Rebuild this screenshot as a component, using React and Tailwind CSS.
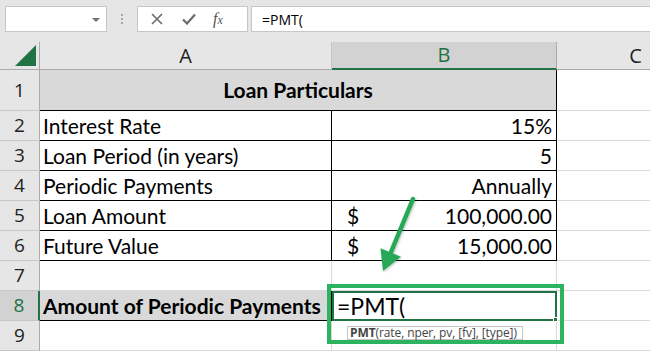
import React from "react";

const cellFont = { fontFamily: "Lato, 'Open Sans', sans-serif" };

function RowHead({ n, active }) {
  return (
    <div
      className={
        "flex items-center justify-center border-b text-[19px] " +
        (active
          ? "bg-[#d2d2d2] border-b-[#c6c6c6] border-r-2 border-r-[#217346] text-[#217346]"
          : "bg-[#e6e6e6] border-b-[#c6c6c6] border-r border-r-[#ababab] text-[#222]")
      }
      style={{ fontFamily: "'Open Sans', sans-serif" }}
    >
      {n}
    </div>
  );
}

function Cell({ children, className = "", right }) {
  return (
    <div
      className={
        "flex items-center overflow-hidden whitespace-nowrap text-[21px] text-black " +
        (right ? "justify-end pr-[4px] " : "pl-[3px] ") +
        className
      }
      style={cellFont}
    >
      {children}
    </div>
  );
}

const grid = "border-r border-b border-r-[#d9d9d9] border-b-[#d9d9d9] bg-white";
const tb = "border-r border-b border-black bg-white";

export default function App() {
  return (
    <div className="relative w-[650px] h-[351px] overflow-hidden bg-[#e6e6e6]">
      {/* toolbar */}
      <div className="flex h-[42px] items-start pt-[6px] pl-[5px]">
        <div className="relative h-[26px] w-[102px] border border-[#c6c6c6] bg-white">
          <div className="absolute right-[6px] top-[11px] h-0 w-0 border-x-[4px] border-t-[4px] border-x-transparent border-t-[#707070]" />
        </div>
        <div className="ml-[14px] mt-[8px] flex w-[2px] flex-col gap-[2px]">
          <div className="h-[2px] w-[2px] bg-[#a6a6a6]" />
          <div className="h-[2px] w-[2px] bg-[#a6a6a6]" />
          <div className="h-[2px] w-[2px] bg-[#a6a6a6]" />
        </div>
        <div className="ml-[14px] flex h-[26px] w-[111px] items-center border border-[#c6c6c6] bg-white">
          <svg width="12" height="12" viewBox="0 0 12 12" className="ml-[13px]">
            <path d="M1 1 L11 11 M11 1 L1 11" stroke="#6b6b6b" strokeWidth="1.6" />
          </svg>
          <svg width="14" height="12" viewBox="0 0 14 12" className="ml-[19px]">
            <path d="M1 6.5 L5 10.5 L13 1.5" stroke="#6b6b6b" strokeWidth="2.2" fill="none" />
          </svg>
          <span
            className="ml-[17px] text-[16px] italic text-[#555]"
            style={{ fontFamily: "'Liberation Serif', serif" }}
          >
            f<span className="text-[12px]">x</span>
          </span>
        </div>
        <div
          className="ml-[3px] flex h-[26px] flex-1 items-center border border-r-0 border-[#c6c6c6] bg-white pl-[10px] text-[14px] text-black"
          style={{ fontFamily: "'Open Sans', sans-serif" }}
        >
          =PMT(
        </div>
      </div>

      {/* sheet grid */}
      <div className="grid grid-cols-[40px_292px_225px_158px] grid-rows-[28px_41px_repeat(8,30px)]">
        {/* header row */}
        <div className="relative border-r border-b border-[#ababab] bg-[#e6e6e6]">
          <svg width="22" height="22" viewBox="0 0 22 22" className="absolute left-[15px] top-[3px]">
            <path d="M21 0 L21 21 L0 21 Z" fill="#217346" />
          </svg>
        </div>
        <div
          className="flex items-center justify-center border-r border-b border-r-[#c6c6c6] border-b-[#ababab] bg-[#e6e6e6] text-[20px] text-[#222]"
          style={{ fontFamily: "'Open Sans', sans-serif" }}
        >
          A
        </div>
        <div
          className="flex items-center justify-center border-r border-b-2 border-r-[#ababab] border-b-[#217346] bg-[#d2d2d2] text-[20px] text-[#217346]"
          style={{ fontFamily: "'Open Sans', sans-serif" }}
        >
          B
        </div>
        <div
          className="flex items-center justify-center border-r border-b border-r-[#c6c6c6] border-b-[#ababab] bg-[#e6e6e6] text-[20px] text-[#222]"
          style={{ fontFamily: "'Open Sans', sans-serif" }}
        >
          C
        </div>

        {/* row 1 */}
        <RowHead n="1" />
        <Cell className="col-span-2 justify-center !pl-0 border-r border-b border-black bg-[#d9d9d9] font-bold">
          Loan Particulars
        </Cell>
        <div className={grid} />

        {/* row 2 */}
        <RowHead n="2" />
        <Cell className={tb}>Interest Rate</Cell>
        <Cell right className={tb}>15%</Cell>
        <div className={grid} />

        {/* row 3 */}
        <RowHead n="3" />
        <Cell className={tb}>Loan Period (in years)</Cell>
        <Cell right className={tb}>5</Cell>
        <div className={grid} />

        {/* row 4 */}
        <RowHead n="4" />
        <Cell className={tb}>Periodic Payments</Cell>
        <Cell right className={tb}>Annually</Cell>
        <div className={grid} />

        {/* row 5 */}
        <RowHead n="5" />
        <Cell className={tb}>Loan Amount</Cell>
        <Cell className={tb + " justify-between !pl-[15px] pr-[4px]"}>
          <span>$</span>
          <span>100,000.00</span>
        </Cell>
        <div className={grid} />

        {/* row 6 */}
        <RowHead n="6" />
        <Cell className={tb}>Future Value</Cell>
        <Cell className={tb + " justify-between !pl-[15px] pr-[4px]"}>
          <span>$</span>
          <span>15,000.00</span>
        </Cell>
        <div className={grid} />

        {/* row 7 */}
        <RowHead n="7" />
        <div className={grid} />
        <div className={grid} />
        <div className={grid} />

        {/* row 8 */}
        <RowHead n="8" active />
        <Cell className="border-r border-b border-black bg-[#d9d9d9] font-bold">
          Amount of Periodic Payments
        </Cell>
        <div className="relative flex items-center border-2 border-[#217346] bg-white pl-[3px] text-[23px] text-black" style={cellFont}>
          =PMT(
          <div className="absolute bottom-[-3px] right-[-3px] h-[5px] w-[5px] border border-white bg-[#217346]" />
        </div>
        <div className={grid} />

        {/* row 9 */}
        <RowHead n="9" />
        <div className={grid} />
        <div className={grid} />
        <div className={grid} />
      </div>

      {/* tooltip */}
      <div
        className="absolute left-[347px] top-[326px] flex h-[14px] w-[176px] items-center border border-[#c6c6c6] bg-white px-[2px] text-[12px] leading-none tracking-[-0.1px] text-[#444]"
        style={{ fontFamily: "'Open Sans', sans-serif" }}
      >
        <span className="font-bold">PMT</span>(rate, nper, pv, [fv], [type])
      </div>

      {/* highlight box */}
      <div className="absolute left-[327px] top-[284px] h-[60px] w-[237px] border-4 border-[#2bb35f]" />

      {/* arrow */}
      <svg className="absolute left-0 top-0" width="650" height="351" viewBox="0 0 650 351">
        <defs>
          <filter id="sh" x="-50%" y="-50%" width="200%" height="200%">
            <feDropShadow dx="1" dy="1" stdDeviation="1.2" floodColor="#000" floodOpacity="0.25" />
          </filter>
        </defs>
        <g filter="url(#sh)">
          <line x1="413" y1="199" x2="391" y2="252" stroke="#25a857" strokeWidth="4.5" strokeLinecap="round" />
          <path d="M383 271 L380.5 248.3 L400.9 256.7 Z" fill="#25a857" />
        </g>
      </svg>
    </div>
  );
}
